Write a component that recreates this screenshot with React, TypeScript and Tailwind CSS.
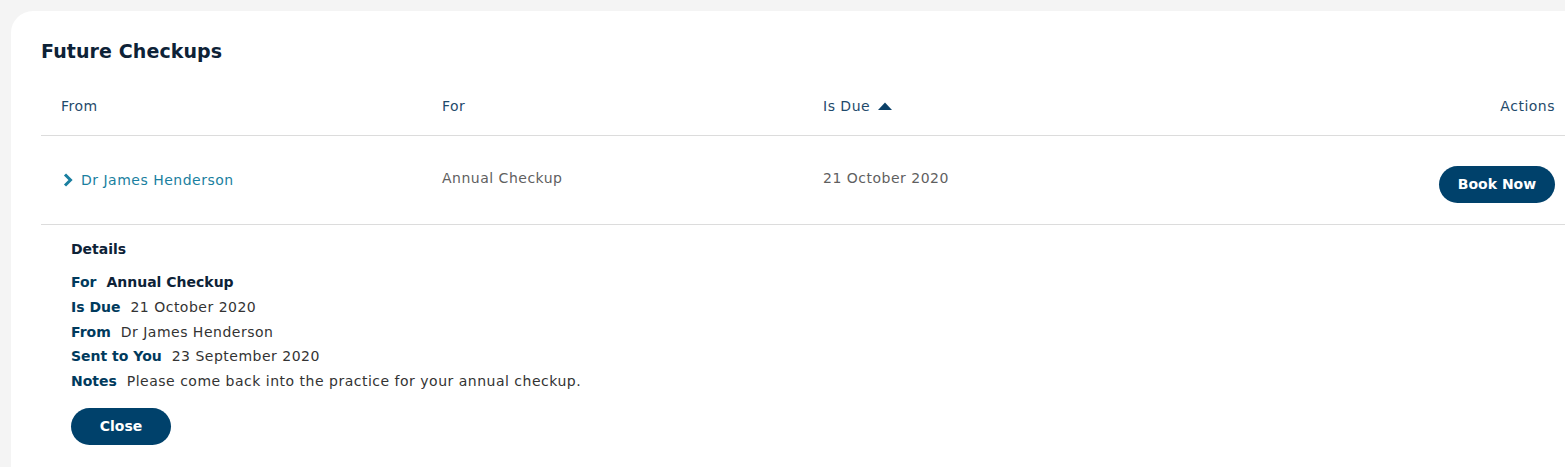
import React from "react";

const font = { fontFamily: '"DejaVu Sans", sans-serif' };

export default function App() {
  return (
    <div className="w-[1565px] h-[467px] bg-[#f4f4f4] pl-[11px] pt-[11px] overflow-hidden" style={font}>
      <div className="w-[1600px] h-[480px] bg-white rounded-tl-[22px] pl-[30px] pt-[28px]">
        <h2 className="text-[19px] leading-[24px] font-bold text-[#0d2237] tracking-[0.1px] mb-[12px]">Future Checkups</h2>
        <div className="w-[1524px] tracking-[0.5px]">
          <div className="grid grid-cols-4 h-[61px] items-center border-b border-[#dcdcdc] text-[14px] text-[#1f4a6b] pt-[2px]">
            <div className="pl-[20px]">From</div>
            <div className="pl-[20px]">For</div>
            <div className="pl-[20px] flex items-center gap-[8px]">
              Is Due
              <svg width="14" height="8" viewBox="0 0 14 8"><path d="M0 8 L7 0.5 L14 8 Z" fill="#0b4068" /></svg>
            </div>
            <div className="text-right pr-[10px]">Actions</div>
          </div>
          <div className="grid grid-cols-4 h-[89px] border-b border-[#dcdcdc] text-[14px]">
            <div className="pl-[22px] pt-[34px] flex items-start gap-[8px] text-[#1a7fa0]">
              <svg className="mt-[3px]" width="10" height="14" viewBox="0 0 10 14"><path d="M2 1.5 L7.5 7 L2 12.5" stroke="#1a7fa0" strokeWidth="3" fill="none" /></svg>
              <span className="leading-[20px]">Dr James Henderson</span>
            </div>
            <div className="pl-[20px] pt-[32px] leading-[20px] text-[#5f5f5f]">Annual Checkup</div>
            <div className="pl-[20px] pt-[32px] leading-[20px] text-[#5f5f5f]">21 October 2020</div>
            <div className="flex justify-end pr-[10px] pt-[30px]">
              <button className="w-[116px] h-[37px] rounded-full bg-[#00416b] text-white font-bold text-[14px] tracking-normal">Book Now</button>
            </div>
          </div>
          <div className="pl-[30px] pt-[14px] text-[14px] leading-[24.8px] text-[#333]">
            <div className="font-bold text-[#0d2237] leading-[20px] mb-[11px] tracking-normal">Details</div>
            <div><span className="font-bold text-[#003a5d] tracking-normal">For</span>&nbsp;&nbsp;<span className="font-bold text-[#0d2237] tracking-normal">Annual Checkup</span></div>
            <div><span className="font-bold text-[#003a5d] tracking-normal">Is Due</span>&nbsp;&nbsp;21 October 2020</div>
            <div><span className="font-bold text-[#003a5d] tracking-normal">From</span>&nbsp;&nbsp;Dr James Henderson</div>
            <div><span className="font-bold text-[#003a5d] tracking-normal">Sent to You</span>&nbsp;&nbsp;23 September 2020</div>
            <div><span className="font-bold text-[#003a5d] tracking-normal">Notes</span>&nbsp;&nbsp;Please come back into the practice for your annual checkup.</div>
            <button className="mt-[14px] w-[100px] h-[37px] rounded-full bg-[#00416b] text-white font-bold text-[14px] tracking-normal">Close</button>
          </div>
        </div>
      </div>
    </div>
  );
}
